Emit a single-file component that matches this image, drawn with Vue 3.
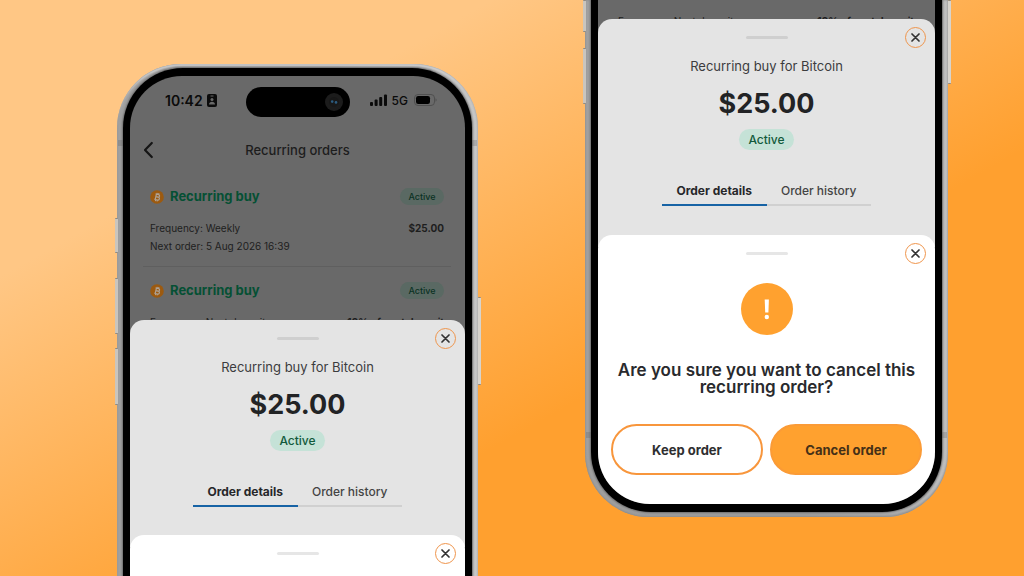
<script setup>
const phones = [
  {
    id: 'left',
    full: true,
    orders: [
      { title: 'Recurring buy', status: 'Active', lines: ['Frequency: Weekly', 'Next order: 5 Aug 2026 16:39'], amount: '$25.00' },
      { title: 'Recurring buy', status: 'Active', lines: ['Frequency: Next deposit'], amount: '10% of next deposit' }
    ]
  },
  {
    id: 'right',
    full: false,
    orders: [{ lines: ['Frequency: Next deposit'], amount: '10% of next deposit' }]
  }
]
</script>

<template>
  <main class="stage">
    <section v-for="p in phones" :key="p.id" class="phone" :class="p.id">
      <i class="key k1"></i><i class="key k2"></i><i class="key k3"></i><i class="key power"></i>
      <i class="band"></i>
      <div class="bezel">
        <div class="screen">
          <template v-if="p.full">
            <div class="status">
              <div class="clock">
                <span>10:42</span>
                <svg width="10" height="13" viewBox="0 0 10 13">
                  <rect width="10" height="13" rx="2" fill="#0b0b0b" />
                  <rect x="3.5" y="1.5" width="3" height="1" fill="#696969" />
                  <circle cx="5" cy="5.6" r="1.5" fill="#696969" />
                  <path d="M2 10.5c0-3.6 6-3.6 6 0z" fill="#696969" />
                </svg>
              </div>
              <div class="island">
                <svg width="18" height="18" viewBox="0 0 18 18">
                  <circle cx="9" cy="9" r="9" fill="#1c1c1c" />
                  <circle cx="9" cy="9" r="5" fill="#181818" />
                  <circle cx="7.2" cy="8.6" r="1.3" fill="#2c5c80" />
                  <circle cx="11" cy="9.4" r="1.3" fill="#2c5c80" />
                </svg>
              </div>
              <div class="signal">
                <svg width="18" height="12" viewBox="0 0 18 12" fill="#0b0b0b">
                  <rect x="0" y="8" width="3" height="4" rx="1" />
                  <rect x="4.6" y="5.5" width="3" height="6.5" rx="1" />
                  <rect x="9.2" y="3" width="3" height="9" rx="1" />
                  <rect x="14" y="0.5" width="3" height="11.5" rx="1" />
                </svg>
                <span>5G</span>
                <svg class="battery" width="23" height="12" viewBox="0 0 23 12">
                  <rect x="0.5" y="0.5" width="20" height="11" rx="3.5" fill="none" stroke="#505050" />
                  <rect x="2" y="2" width="14" height="8" rx="2.2" fill="#000" />
                  <path d="M21.6 4.2c1.2.6 1.2 3 0 3.6z" fill="#484848" />
                </svg>
              </div>
            </div>
            <header class="nav">
              <button class="back" aria-label="Back">
                <svg width="12" height="18" viewBox="0 0 12 18"><path d="M9.8 2 3 9l6.8 7" fill="none" stroke="#151515" stroke-width="2.2" stroke-linecap="round" stroke-linejoin="round" /></svg>
              </button>
              <h1>Recurring orders</h1>
            </header>
          </template>

          <ul class="orders">
            <li v-for="(o, i) in p.orders" :key="i">
              <div v-if="o.title" class="head">
                <svg width="14" height="14" viewBox="0 0 14 14">
                  <circle cx="7" cy="7" r="6.8" fill="#9c5a10" />
                  <path d="M4.9 4.3h3.1a1.3 1.3 0 0 1 0 2.6H5.7h2.6a1.45 1.45 0 0 1 0 2.9H4.9M5.8 4.3v5.5M6.4 2.8v1.5M8 2.8v1.5M6.4 9.8v1.5M8 9.8v1.5" transform="rotate(13 7 7)" fill="none" stroke="#aea295" stroke-width="1.2" />
                </svg>
                <h2>{{ o.title }}</h2>
                <span class="pill">{{ o.status }}</span>
              </div>
              <div class="info">
                <div><p v-for="l in o.lines" :key="l">{{ l }}</p></div>
                <strong>{{ o.amount }}</strong>
              </div>
            </li>
          </ul>

          <section class="sheet grey">
            <i class="handle"></i>
            <button class="close" aria-label="Close">
              <svg width="9" height="9" viewBox="0 0 9 9"><path d="m1 1 7 7M8 1 1 8" stroke="#333" stroke-width="1.7" stroke-linecap="round" /></svg>
            </button>
            <p class="caption">Recurring buy for Bitcoin</p>
            <p class="sum">$25.00</p>
            <span class="tag">Active</span>
            <nav class="tabs">
              <button class="on">Order details</button>
              <button>Order history</button>
            </nav>
          </section>

          <section class="sheet white">
            <i class="handle"></i>
            <button class="close" aria-label="Close">
              <svg width="9" height="9" viewBox="0 0 9 9"><path d="m1 1 7 7M8 1 1 8" stroke="#333" stroke-width="1.7" stroke-linecap="round" /></svg>
            </button>
            <template v-if="!p.full">
              <svg class="alert" width="52" height="52" viewBox="0 0 52 52">
                <circle cx="26" cy="26" r="26" fill="#ffa12f" />
                <path d="M23.7 16.4h4.2l-.5 13h-3.2z" fill="#fff" />
                <circle cx="25.8" cy="34" r="2.2" fill="#fff" />
              </svg>
              <h2 class="ask">Are you sure you want to cancel this recurring order?</h2>
              <div class="actions">
                <button>Keep order</button>
                <button class="primary">Cancel order</button>
              </div>
            </template>
          </section>
        </div>
      </div>
    </section>
  </main>
</template>

<style>
body { margin: 0; }
</style>

<style scoped>
* { box-sizing: border-box; }
h1, h2, p, ul { margin: 0; padding: 0; }
button { font: inherit; color: inherit; background: none; border: 0; padding: 0; }
svg { display: block; flex: none; }
.stage {
  display: grid;
  grid-template-columns: 117fr 361fr 107fr 363fr 76fr;
  height: 100vh;
  overflow: hidden;
  background: linear-gradient(to bottom right, #ffc785 24%, #ffa02f 63%);
  font-family: Inter, "Liberation Sans", sans-serif;
  color: #222325;
}
.phone {
  position: relative;
  padding: 4px 6px 5px;
}
.left {
  grid-column: 2;
  margin-top: 64px;
  padding-bottom: 0;
  border-radius: 64px 64px 0 0;
  background: linear-gradient(90deg, #a0a0a0 60%, #c8c8c8);
  box-shadow: inset 0 0 2px #858585, inset 0 3px 2px -1px #dcdcdc;
}
.right {
  grid-column: 4;
  align-self: start;
  padding-top: 0;
  border-radius: 0 0 64px 64px;
  background: linear-gradient(90deg, #a0a0a0 60%, #c0c0c0);
  box-shadow: inset 0 0 2px #808080, inset 0 -3px 3px -1px #9a9a9a;
}
.bezel { background: #000; padding: 0 7px; box-shadow: 0 0 2px 1px #6c6c6c; }
.left .bezel { height: 100%; padding-top: 8px; border-radius: 60px 60px 0 0; }
.right .bezel { padding-bottom: 8px; border-radius: 0 0 60px 60px; }
.screen {
  display: flex;
  flex-direction: column;
  background: #696969;
  overflow: hidden;
}
.left .screen { height: 100%; border-radius: 52px 52px 0 0; padding-top: 11px; }
.right .screen { border-radius: 0 0 52px 52px; padding-top: 12px; }

.key { position: absolute; left: -2px; width: 3px; background: #c9c5be; border: 1px solid #8f8a82; border-width: 1px 0; border-radius: 1px; }
.key.power { left: auto; right: -3px; background: #d8d4cd; }
.left .k1 { top: 154px; height: 35px; }
.left .k2 { top: 214px; height: 56px; }
.left .k3 { top: 284px; height: 57px; }
.left .power { top: 233px; height: 88px; }
.right .k1 { display: none; }
.right .k2 { top: 0; height: 32px; }
.right .k3 { top: 48px; height: 56px; }
.right .power { top: 0; height: 84px; }
.band { position: absolute; left: 1px; right: 1px; height: 6px; border: solid #5a5a5a; border-width: 0 5px; opacity: .25; }
.left .band { top: 76px; }
.right .band { top: 432px; }

.status {
  display: grid;
  grid-template-columns: 1fr 104px 1fr;
  align-items: center;
  height: 30px;
  flex: none;
  color: #0b0b0b;
}
.clock { display: flex; align-items: center; gap: 4px; padding-left: 35px; height: 18px; margin-bottom: 4px; font-size: 14px; font-weight: 600; }
.island { height: 30px; border-radius: 15px; background: #000; display: flex; align-items: center; justify-content: flex-end; padding-right: 7px; }
.signal { display: flex; align-items: center; gap: 4px; padding-left: 20px; height: 18px; margin-bottom: 4px; font-size: 12px; font-weight: 500; }
.battery { margin-left: 2px; }
.nav { position: relative; height: 20px; margin: 23px 0 13px; flex: none; text-align: center; color: #1d1d1d; }
.nav h1 { font-size: 13px; line-height: 20px; font-weight: 500; }
.back { position: absolute; left: 12px; top: 1px; }

.orders { list-style: none; margin: 0 14px -11px 13px; color: #1e1e1e; flex: none; }
.orders li { padding: 15px 7px 11px; }
.orders li:last-child { padding-bottom: 0; }
.right .orders li { padding: 0 7px; }
.orders li + li { border-top: 1px solid #5f5f5f; }
.head { display: flex; align-items: center; height: 17px; margin-bottom: 14px; }
.head h2 { margin-left: 6px; flex: 1; font-size: 13px; line-height: 17px; font-weight: 700; color: #055034; }
.pill { width: 44px; height: 17px; border-radius: 9px; background: #5a6963; color: #0b3223; font-size: 9px; line-height: 17px; font-weight: 500; text-align: center; }
.info { display: flex; justify-content: space-between; font-size: 10px; line-height: 18px; }
.info strong { font-weight: 700; }

.sheet {
  position: relative;
  flex: none;
  display: flex;
  flex-direction: column;
  align-items: center;
  border-radius: 14px 14px 0 0;
}
.grey { background: #e4e4e4; padding: 37px 0 41px; }
.left .grey { padding-bottom: 40px; }
.white { background: #fff; margin-top: -12px; padding: 48px 13px 29px; }
.left .white { flex: 1; }
.handle { position: absolute; top: 17px; left: 50%; width: 42px; height: 3px; margin-left: -21px; border-radius: 2px; background: #cfcfcf; }
.white .handle { background: #e6e6e6; }
.close { position: absolute; top: 8px; right: 9px; width: 21px; height: 21px; border: 1px solid #ef954c; border-radius: 50%; display: grid; place-items: center; }
.caption { font-size: 13px; line-height: 20px; color: #3c3c3e; }
.sum { margin-top: 10px; font-size: 27px; line-height: 36px; font-weight: 700; }
.tag { margin-top: 7px; width: 55px; height: 21px; border-radius: 11px; background: #c5e2d7; color: #125a3c; font-size: 12px; line-height: 21px; font-weight: 500; text-align: center; }
.tabs { display: flex; width: 209px; margin-top: 31px; font-size: 12px; line-height: 20px; color: #444; }
.tabs button { flex: 1; height: 25px; padding-bottom: 3px; border-bottom: 2px solid #d0d0d0; font-weight: 500; white-space: nowrap; }
.tabs .on { border-color: #1763a5; color: #26272a; font-weight: 700; }
.ask { margin: 27px 0 28px; font-size: 17px; line-height: 17px; font-weight: 600; text-align: center; color: #292a2d; }
.actions { display: flex; gap: 7px; align-self: stretch; }
.actions button { flex: 1; height: 51px; border: 2px solid #f8963c; border-radius: 26px; font-size: 13px; font-weight: 700; color: #2f2f31; }
.actions .primary { background: #ffa12f; border-color: #fb9b36; color: #453017; }
</style>
